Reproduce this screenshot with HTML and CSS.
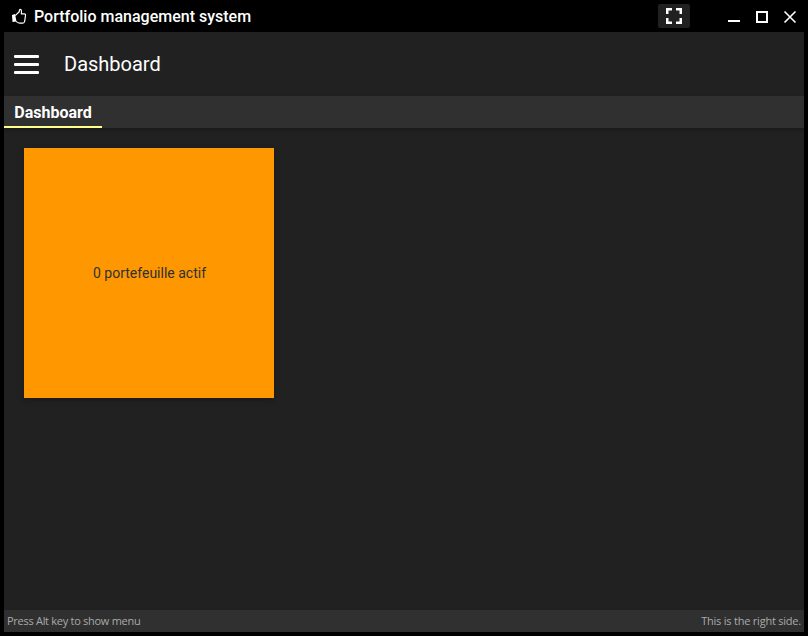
FILE: index.html
```html
<!DOCTYPE html>
<html lang="en">
<head>
<meta charset="utf-8">
<title>Portfolio management system</title>
<link rel="stylesheet" href="styles.css">
</head>
<body>
<div class="window">
  <header class="titlebar">
    <svg class="thumb" width="16" height="16" viewBox="0 0 16 16"><path class="cuff" d="M1 7L4 6L5.500 13.500L1.500 14z"/><path d="M4.200 7.600L8.200 3.800L8.500 1.800Q9.200 1 10 1.700Q10.900 2.700 10.300 5.900H13.600Q14.800 6.200 14.500 7.600L13.600 13.600Q13 15.200 11.500 15.200H8.500Q6.800 15 5.100 13.400"/></svg>
    <h1 class="title">Portfolio management system</h1>
    <button class="fullscreen" aria-label="Fullscreen"><svg width="32" height="24" viewBox="0 0 32 24"><path d="M9.250 10V5.250h4.750M18 5.250h4.750v4.750M22.750 14v4.750h-4.750M14 18.750H9.250v-4.750"/></svg></button>
    <svg class="controls" width="80" height="24" viewBox="0 0 80 24"><path d="M6 17h12M35 8h10v10H35z"/><path class="close" d="M62.500 7.500l11 11M73.500 7.500l-11 11"/></svg>
  </header>
  <div class="toolbar"><div class="menu"><i></i><i></i><i></i></div><h2>Dashboard</h2></div>
  <nav class="tabs"><a class="tab">Dashboard</a></nav>
  <main class="content"><section class="tile">0 portefeuille actif</section></main>
  <footer class="status"><span>Press Alt key to show menu</span><span class="right">This is the right side.</span></footer>
</div>
</body>
</html>
```
FILE: styles.css
```css
* { box-sizing: border-box; }
body { margin: 0; background: #000; color: #fff; font-family: Roboto, sans-serif; }
.window { height: 636px; padding: 0 4px 4px; display: flex; flex-direction: column; }
.titlebar { height: 32px; display: flex; align-items: center; padding-left: 7px; }
.thumb { fill: none; stroke: #fff; stroke-width: 1.2; stroke-linejoin: round; margin-right: 7px; }
.thumb .cuff { fill: #fff; stroke: none; }
.title { margin: 0 auto 0 0; font-size: 16px; font-weight: 500; }
.fullscreen { display: flex; border: 0; padding: 0; background: #212121; border-radius: 2px; margin-right: 32px; }
.fullscreen path, .controls path { fill: none; stroke: #fff; stroke-width: 2; }
.fullscreen path { stroke-width: 2.5; }
.controls { display: block; margin-right: 2px; }
.controls .close { stroke-width: 1.6; }
.toolbar { height: 64px; display: flex; align-items: center; background: #212121; padding-left: 10px; }
.menu { display: flex; flex-direction: column; gap: 5px; width: 25px; margin: 1px 25px 0 0; }
.menu i { height: 3px; background: #fff; border-radius: 1px; }
.toolbar h2 { margin: 0; font-size: 20px; font-weight: 400; }
.tabs { height: 32px; background: #303030; display: flex; position: relative; box-shadow: 0 2px 4px rgba(0,0,0,.25); }
.tab { width: 98px; border-bottom: 2px solid #ffff8d; font-size: 16px; font-weight: 700; line-height: 33px; text-align: center; }
.content { flex: 1; background: #212121; padding: 20px; }
.tile { width: 250px; height: 250px; display: flex; align-items: center; justify-content: center; padding-left: 1px; background: #ff9800; color: #303030; font-size: 14px; box-shadow: 0 2px 5px rgba(0,0,0,.26); }
.status { height: 22px; display: flex; align-items: center; justify-content: space-between; padding: 0 3px 1px; background: #303030; color: #aaa; font: 11px "Open Sans", sans-serif; letter-spacing: -.28px; }
.right { letter-spacing: -.22px; }
```
